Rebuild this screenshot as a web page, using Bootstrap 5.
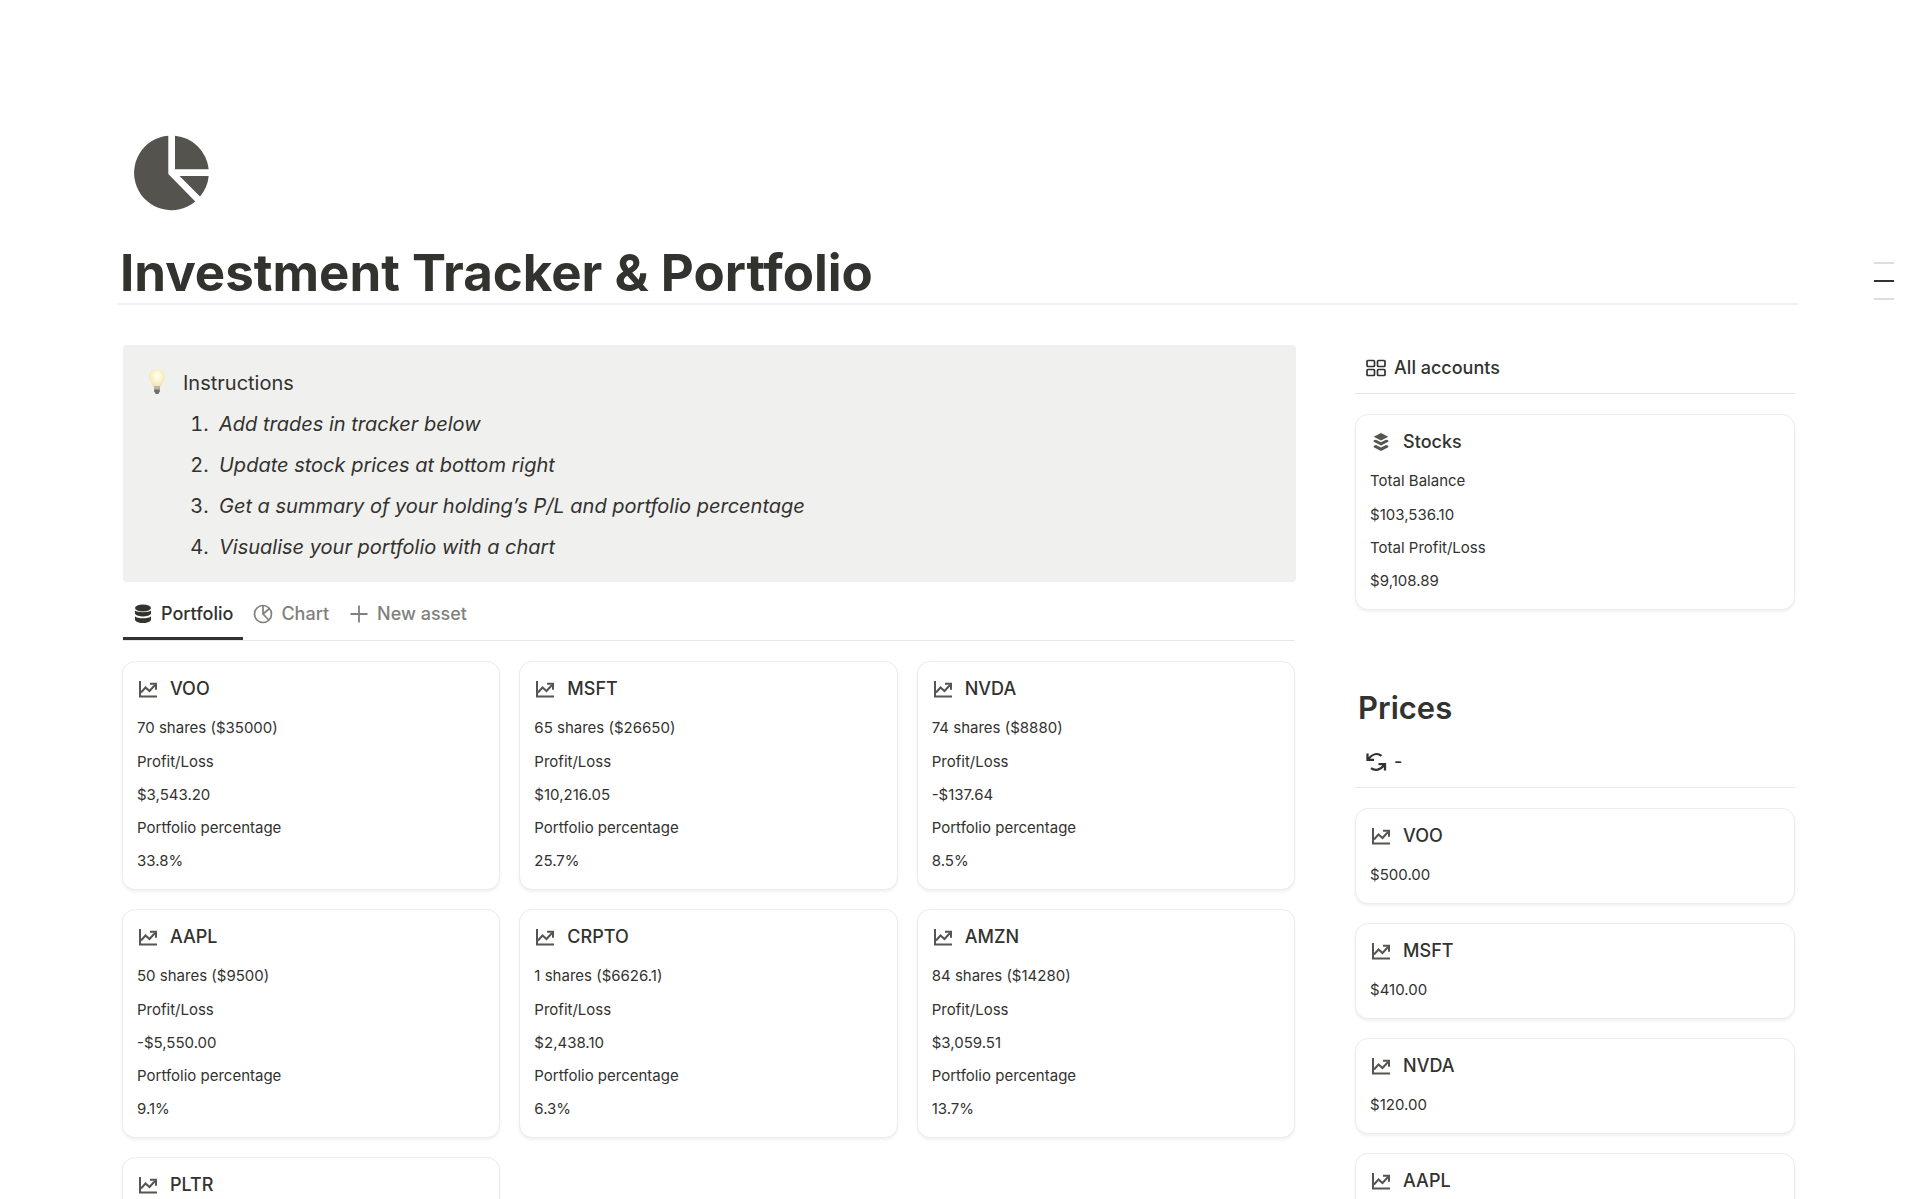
<!DOCTYPE html>
<html lang="en">
<head>
<meta charset="utf-8">
<meta name="viewport" content="width=device-width, initial-scale=1">
<title>Investment Tracker &amp; Portfolio</title>
<link href="https://cdn.jsdelivr.net/npm/bootstrap@5.3.0/dist/css/bootstrap.min.css" rel="stylesheet">
<style>
  :root { --ink: #32322f; --soft: #80807d; --line: #e7e7e6; --edge: #ececeb; }
  body { font-family: Inter, "Liberation Sans", sans-serif; color: var(--ink); font-size: 15px; background: #fff; overflow-x: hidden; }
  .page-wrap { padding: 129px 122px 0 118px; }
  .page-icon { width: 88px; height: 88px; margin-left: 10px; display: block; }
  .page-title { font-size: 51px; font-weight: 700; line-height: 60px; margin: 26px 0 0 2px; }
  .title-rule { border-top: 2px solid #f1f1f0; }
  .page-cols { gap: 60px; padding: 40px 3px 0 4px; }
  .col-wide { flex: 8 1 0; min-width: 0; }
  .col-side { flex: 3 1 0; min-width: 0; }
  .callout { background: #f0f0ee; border-radius: 4px; margin: 0 -1px 0 1px; padding: 18px 24px 14px 21px; font-size: 20px; font-optical-sizing: none; line-height: 41px; gap: 13px; }
  .callout svg { width: 26px; height: 26px; margin-top: 6px; }
  .callout ol { padding-left: 31px; margin: 0; }
  .callout li { padding-left: 5px; }
  .tab-bar { height: 59px; margin-left: 1px; padding-top: 8px; border-bottom: 1px solid var(--line); }
  .tab-bar button { border: 0; border-bottom: 3px solid transparent; background: none; color: var(--soft); font-size: 18px; font-weight: 500; padding: 0 10px; gap: 8px; }
  .tab-bar button svg { width: 20px; height: 20px; }
  .tab-bar button.active { color: var(--ink); border-bottom-color: var(--ink); }
  .holdings { display: grid; grid-template-columns: repeat(3, 1fr); gap: 19px; margin-top: 20px; }
  .asset { display: block; border: 1px solid var(--edge); border-radius: 13px; box-shadow: 0 2px 3px rgba(0,0,0,.06); padding: 12px 14px; color: inherit; text-decoration: none; background: #fff; }
  .asset h3 { font-size: 18px; font-weight: 500; line-height: 30px; margin: 0 0 7px; gap: 11px; }
  .asset h3 svg { width: 22px; height: 22px; color: #555552; }
  .asset p { margin: 0; line-height: 33px; }
  .asset h3 + p:not(:last-child) { margin-bottom: 1px; }
  .view-bar { height: 49px; border-bottom: 1px solid var(--line); padding: 0 0 3px 10px; }
  .view-bar button { border: 0; background: none; padding: 0; gap: 7px; font-size: 18px; font-weight: 500; color: var(--ink); }
  .view-bar svg { width: 22px; height: 22px; }
  .prices-title { font-size: 31px; font-weight: 600; line-height: 40px; margin: 78px 0 11px 3px; }
  .side-list { gap: 19px; margin-top: 20px; }
  .outline-nav { position: fixed; right: 26px; top: 262px; gap: 16px; }
  .outline-nav a { display: block; width: 20px; height: 2px; background: #dededd; }
  .outline-nav a.active { background: var(--ink); }
</style>
</head>
<body>
<svg width="0" height="0" class="position-absolute" aria-hidden="true">
  <symbol id="i-trend" viewBox="0 0 22 22"><g fill="none" stroke="currentColor" stroke-width="2"><path d="M3 3v15.500h17"/><path d="M4 14.500 8.500 9.500l4 3.500L18 7"/><path d="M13 5.800h6v6"/></g></symbol>
  <symbol id="i-db" viewBox="0 0 20 20"><g fill="currentColor"><ellipse cx="10" cy="4" rx="8" ry="3.500"/><path d="M2 6.500c2 2.300 14 2.300 16 0v3.300c-2 3.500-14 3.500-16 0z"/><path d="M2 12.300c2 2.700 14 2.700 16 0v3.600c-2 4.200-14 4.200-16 0z"/></g></symbol>
  <symbol id="i-pie" viewBox="0 0 20 20"><g fill="none" stroke="currentColor" stroke-width="1.700"><circle cx="10" cy="10" r="8.500"/><path d="M10 1.500V10l5.800 6M10 10l6.500-5.500"/></g></symbol>
  <symbol id="i-plus" viewBox="0 0 20 20"><path d="M10 1.500v17M1.500 10h17" fill="none" stroke="currentColor" stroke-width="1.800"/></symbol>
  <symbol id="i-grid" viewBox="0 0 22 22"><g fill="none" stroke="currentColor" stroke-width="1.700"><rect x="2" y="3.500" width="7.500" height="6" rx="1"/><rect x="12.500" y="3.500" width="7.500" height="6" rx="1"/><rect x="2" y="12.500" width="7.500" height="6" rx="1"/><rect x="12.500" y="12.500" width="7.500" height="6" rx="1"/></g></symbol>
  <symbol id="i-stack" viewBox="0 0 22 22"><g fill="currentColor"><path d="M11 2 18.300 5.700 11 9.500 3.700 5.700z"/><path d="M3.700 9.300 6 8.700l5 2.500 5-2.500 2.300.6v1.400L11 14.500 3.700 10.700z"/><path d="M3.700 14.800 6 14l5 2.500 5-2.500 2.300.8v1.400L11 20 3.700 16.200z"/></g></symbol>
  <symbol id="i-sync" viewBox="0 0 22 22"><g fill="none" stroke="currentColor" stroke-width="2.300"><path d="M16.500 4.800C12.500 1.700 7.500 3 3.500 7.800M2.500 2.500v6.300h6.500"/><path d="M6 17.200c4 3 9.500 2 13-3M20 19.500v-6.300h-6.500"/></g></symbol>
</svg>

<nav class="outline-nav d-flex flex-column" aria-label="Page outline">
  <a href="#top" aria-label="Top"></a><a href="#portfolio" class="active" aria-label="Portfolio"></a><a href="#prices" aria-label="Prices"></a>
</nav>

<main class="page-wrap container-fluid" id="top">
  <svg class="page-icon" viewBox="0 0 88 88" aria-hidden="true"><g fill="#55534e"><path d="M40.300 6.700A37.300 37.300 0 1 0 67.300 72.500L40.300 45z"/><path d="M47 6.700A37.300 37.300 0 0 1 80.700 40.300H47z"/><path d="M51.500 47h29.200a37 37 0 0 1-8.700 20.500z"/></g></svg>
  <h1 class="page-title">Investment Tracker &amp; Portfolio</h1>
  <div class="title-rule"></div>

  <div class="page-cols d-flex align-items-start">
    <section class="col-wide" id="portfolio">
      <div class="callout d-flex align-items-start">
        <svg viewBox="0 0 26 26" aria-hidden="true"><defs><radialGradient id="glow" cx=".5" cy=".4" r=".6"><stop offset="0" stop-color="#fffff8"/><stop offset=".4" stop-color="#fdf8cf"/><stop offset="1" stop-color="#ece2b4"/></radialGradient></defs><path d="M13 0c4.600 0 8 3.500 8 7.700 0 4-3 5.500-4 10.300H9C8 13.200 5 11.700 5 7.700 5 3.500 8.400 0 13 0z" fill="url(#glow)"/><path d="M10 17h6v5l-1.500 2.500h-3L10 22z" fill="#b5b4ae"/><path d="M10.300 20.500h5.400v1.700L14.300 25h-2.600l-1.400-2.800z" fill="#6d6d6b"/></svg>
        <div class="flex-grow-1">
          <div>Instructions</div>
          <ol>
            <li><em>Add trades in tracker below</em></li>
            <li><em>Update stock prices at bottom right</em></li>
            <li><em>Get a summary of your holding’s P/L and portfolio percentage</em></li>
            <li><em>Visualise your portfolio with a chart</em></li>
          </ol>
        </div>
      </div>

      <div class="tab-bar d-flex" role="tablist">
        <button type="button" role="tab" aria-selected="true" class="active d-flex align-items-center"><svg><use href="#i-db"/></svg>Portfolio</button>
        <button type="button" role="tab" aria-selected="false" class="d-flex align-items-center"><svg><use href="#i-pie"/></svg>Chart</button>
        <button type="button" role="tab" aria-selected="false" class="d-flex align-items-center"><svg><use href="#i-plus"/></svg>New asset</button>
      </div>

      <div class="holdings">
        <a href="#voo" class="asset"><h3 class="d-flex align-items-center"><svg><use href="#i-trend"/></svg>VOO</h3><p>70 shares ($35000)</p><p>Profit/Loss</p><p>$3,543.20</p><p>Portfolio percentage</p><p>33.8%</p></a>
        <a href="#msft" class="asset"><h3 class="d-flex align-items-center"><svg><use href="#i-trend"/></svg>MSFT</h3><p>65 shares ($26650)</p><p>Profit/Loss</p><p>$10,216.05</p><p>Portfolio percentage</p><p>25.7%</p></a>
        <a href="#nvda" class="asset"><h3 class="d-flex align-items-center"><svg><use href="#i-trend"/></svg>NVDA</h3><p>74 shares ($8880)</p><p>Profit/Loss</p><p>-$137.64</p><p>Portfolio percentage</p><p>8.5%</p></a>
        <a href="#aapl" class="asset"><h3 class="d-flex align-items-center"><svg><use href="#i-trend"/></svg>AAPL</h3><p>50 shares ($9500)</p><p>Profit/Loss</p><p>-$5,550.00</p><p>Portfolio percentage</p><p>9.1%</p></a>
        <a href="#crpto" class="asset"><h3 class="d-flex align-items-center"><svg><use href="#i-trend"/></svg>CRPTO</h3><p>1 shares ($6626.1)</p><p>Profit/Loss</p><p>$2,438.10</p><p>Portfolio percentage</p><p>6.3%</p></a>
        <a href="#amzn" class="asset"><h3 class="d-flex align-items-center"><svg><use href="#i-trend"/></svg>AMZN</h3><p>84 shares ($14280)</p><p>Profit/Loss</p><p>$3,059.51</p><p>Portfolio percentage</p><p>13.7%</p></a>
        <a href="#pltr" class="asset"><h3 class="d-flex align-items-center"><svg><use href="#i-trend"/></svg>PLTR</h3></a>
      </div>
    </section>

    <aside class="col-side">
      <div class="view-bar d-flex"><button type="button" class="d-flex align-items-center"><svg><use href="#i-grid"/></svg>All accounts</button></div>
      <div class="side-list d-flex flex-column">
        <a href="#stocks" class="asset"><h3 class="d-flex align-items-center"><svg><use href="#i-stack"/></svg>Stocks</h3><p>Total Balance</p><p>$103,536.10</p><p>Total Profit/Loss</p><p>$9,108.89</p></a>
      </div>

      <h2 class="prices-title" id="prices">Prices</h2>
      <div class="view-bar d-flex"><button type="button" class="d-flex align-items-center"><svg><use href="#i-sync"/></svg>-</button></div>
      <div class="side-list d-flex flex-column">
        <a href="#price-voo" class="asset"><h3 class="d-flex align-items-center"><svg><use href="#i-trend"/></svg>VOO</h3><p>$500.00</p></a>
        <a href="#price-msft" class="asset"><h3 class="d-flex align-items-center"><svg><use href="#i-trend"/></svg>MSFT</h3><p>$410.00</p></a>
        <a href="#price-nvda" class="asset"><h3 class="d-flex align-items-center"><svg><use href="#i-trend"/></svg>NVDA</h3><p>$120.00</p></a>
        <a href="#price-aapl" class="asset"><h3 class="d-flex align-items-center"><svg><use href="#i-trend"/></svg>AAPL</h3></a>
      </div>
    </aside>
  </div>
</main>
<script src="https://cdn.jsdelivr.net/npm/bootstrap@5.3.0/dist/js/bootstrap.bundle.min.js"></script>
</body>
</html>
